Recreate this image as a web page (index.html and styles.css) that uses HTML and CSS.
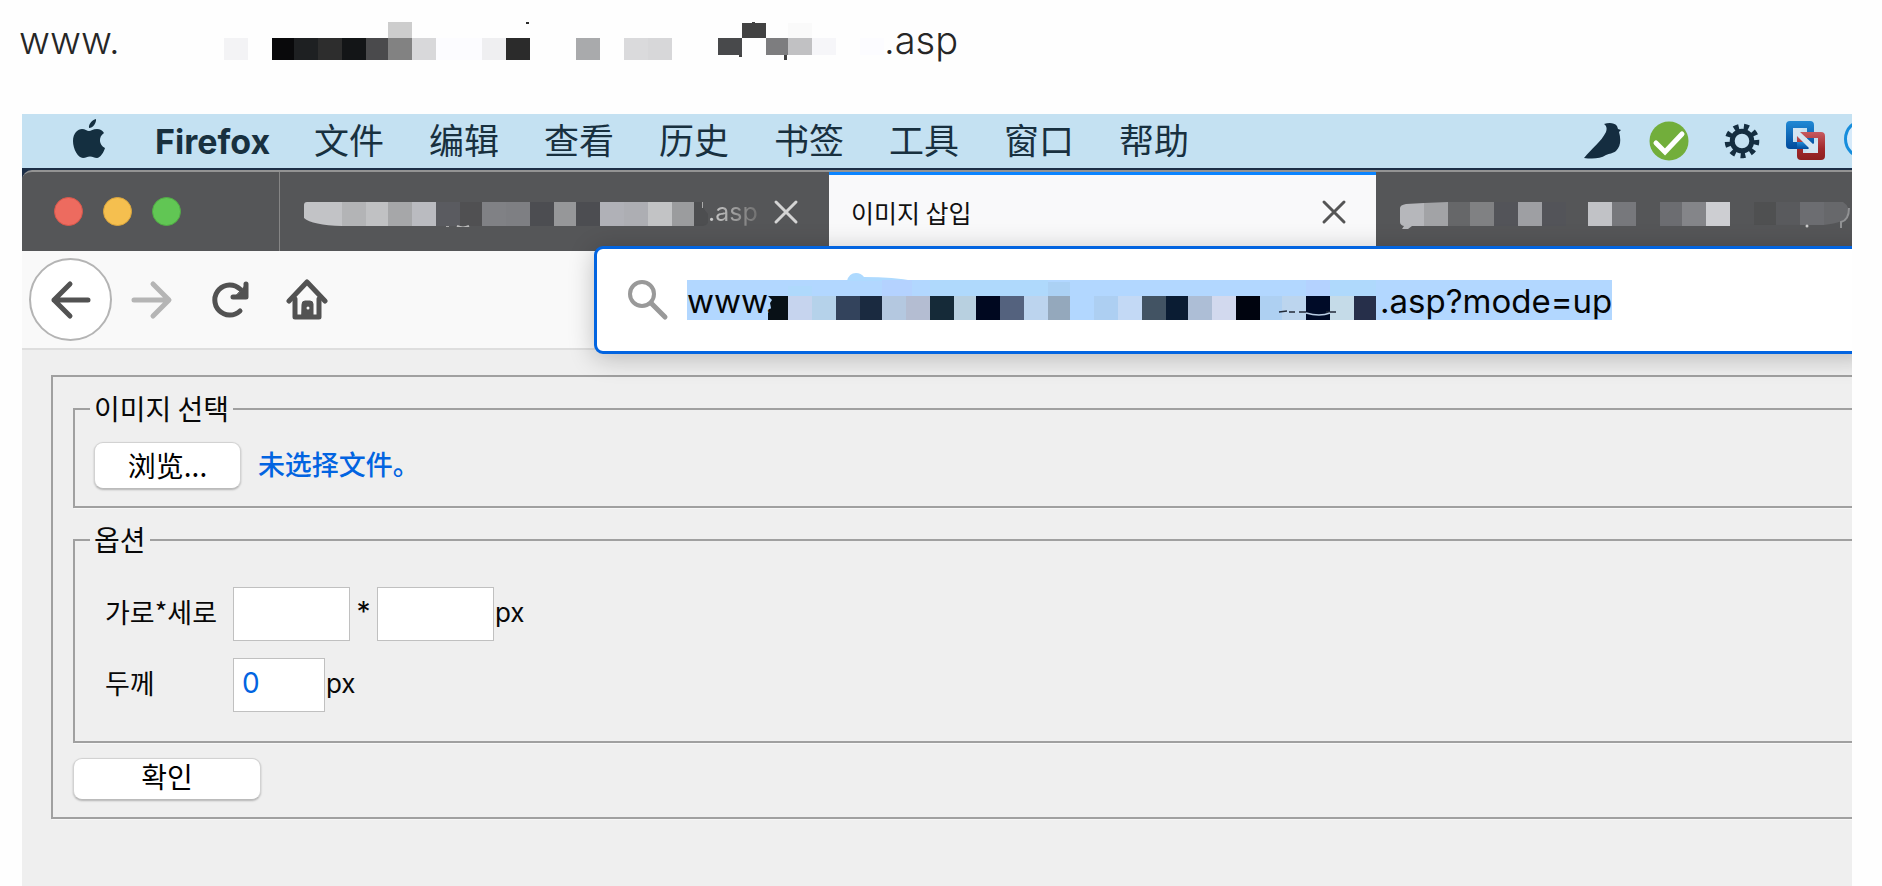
FILE: index.html
```html
<!DOCTYPE html>
<html lang="zh-CN">
<head>
<meta charset="utf-8">
<title>이미지 삽입</title>
<link rel="stylesheet" href="styles.css">
</head>
<body>
<main class="article">
  <p class="address">
    <span class="address-start">www.</span>
    <svg class="address-mask" width="772" height="44" viewBox="112 18 772 44" shape-rendering="crispEdges" aria-hidden="true">
      <path fill="#f3f3f5" d="M224 38h24v22h-24z"/><path fill="#09090b" d="M272 38h22v22h-22z"/><path fill="#1e2022" d="M294 38h24v22h-24z"/><path fill="#2d2d2d" d="M318 38h24v22h-24z"/><path fill="#131517" d="M342 38h24v22h-24z"/><path fill="#4a4a4c" d="M366 38h22v22h-22z"/><path fill="#cdcdcd" d="M388 22h24v16h-24z"/><path fill="#828282" d="M388 38h24v22h-24z"/><path fill="#d8d8da" d="M412 38h24v22h-24z"/><path fill="#fcfcff" d="M436 38h46v22h-46z"/><path fill="#efeff1" d="M482 38h24v22h-24z"/><path fill="#2b2b2b" d="M506 38h24v22h-24zM526 22h3v2h-3z"/>
      <path fill="#a9aaac" d="M576 38h24v22h-24z"/><path fill="#dadadc" d="M624 38h24v22h-24z"/><path fill="#d7d7d9" d="M648 38h24v22h-24z"/><path fill="#48494b" d="M718 38h24v17h-24z"/><path fill="#424242" d="M742 23h24v15h-24zM752 22h3v1h-3zM739 55h3v2h-3zM784 55h3v5h-3z"/><path fill="#7d7d7f" d="M766 38h22v17h-22z"/><path fill="#c1c1c3" d="M788 38h24v17h-24z"/><path fill="#fafafa" d="M788 23h24v15h-24z"/><path fill="#f6f6f9" d="M812 38h24v17h-24z"/><path fill="#fcfcff" d="M860 38h24v17h-24z"/>
    </svg>
    <span>.asp</span>
  </p>

  <section class="desktop">
    <header class="menubar">
      <svg class="apple" width="32" height="40" viewBox="0 0 32 40" aria-hidden="true"><path fill="#142f40" d="M23 0c.5 4-3 9-7 9C15.500 5 19 1 23 0zM16 12c2 0 4-2 8-2 3 0 5.500 1.500 7 4-6 4-5 12 1 15-1 4-5 10-8 10-3 0-4-1.500-7-1.500S13 39 10 39C5 39 0 30 0 22 0 14 5 10 9 10c3 0 5 2 7 2z"/></svg>
      <strong class="app-name">Firefox</strong>
      <nav class="menus"><span>文件</span><span>编辑</span><span>查看</span><span>历史</span><span>书签</span><span>工具</span><span>窗口</span><span>帮助</span></nav>
      <div class="status">
        <svg width="38" height="36" viewBox="0 0 38 36" aria-hidden="true"><path fill="#142d40" d="M20 1c5-1.500 10-1.500 13 2l1 3 3 1-2 2c2 7 2 14-3 19-4 3-6 2-10 4-6 4-14 4-22 3C8 25 17 19 22 9c1-3 1-6-2-8z"/></svg>
        <svg class="status-check" width="40" height="40" viewBox="0 0 40 40" aria-hidden="true"><circle cx="20" cy="20" r="19.500" fill="#72ae3b"/><path d="M7 22l9 9 17-18" fill="none" stroke="#fff" stroke-width="5" stroke-linecap="round"/></svg>
        <svg class="status-gear" width="36" height="36" viewBox="-18 -18 36 36" aria-hidden="true"><g fill="none" stroke="#142d40"><circle r="9.800" stroke-width="5"/><circle r="14.300" stroke-width="6" stroke-dasharray="4.800 5.180" transform="rotate(-4)"/></g></svg>
        <svg class="status-vm" width="40" height="42" viewBox="0 0 40 42" aria-hidden="true"><defs><linearGradient id="vb" x2="0" y2="1"><stop stop-color="#2189d5"/><stop offset="1" stop-color="#004a9c"/></linearGradient><linearGradient id="vr" x2="0" y2="1"><stop stop-color="#c75a60"/><stop offset=".6" stop-color="#a0282b"/><stop offset="1" stop-color="#8d2020"/></linearGradient></defs><path fill="url(#vb)" fill-rule="evenodd" d="M4 1h20q4 0 4 4v20q0 4-4 4H4q-4 0-4-4V5q0-4 4-4zm3 7v14h14V8z"/><path fill="url(#vr)" fill-rule="evenodd" d="M15 12h20q4 0 4 4v20q0 4-4 4H15q-4 0-4-4V16q0-4 4-4zm2 6v15h15V18z"/><path fill="url(#vb)" d="M11 22h10v7H11z"/><path fill="#d3e5f2" d="M7 8h10l-3 4 13 12 5-4v13H19l4-5L11 16l-4 4z"/></svg>
        <svg class="status-ring" width="8" height="40" viewBox="0 0 8 40" aria-hidden="true"><circle cx="20" cy="20" r="18.500" fill="#d6eafa" stroke="#168ddc" stroke-width="3"/></svg>
      </div>
    </header>

    <div class="window">
      <div class="tabbar">
        <div class="lights"><i class="light red"></i><i class="light yellow"></i><i class="light green"></i></div>
        <div class="tab">
          <svg width="404" height="30" viewBox="304 197 404 30" aria-hidden="true"><g shape-rendering="crispEdges"><path fill="#b3b4b6" d="M342 202h24v24h-24z"/><path fill="#c0c1c3" d="M366 202h22v24h-22z"/><path fill="#a6a7a9" d="M388 202h24v24h-24z"/><path fill="#babbc0" d="M412 202h24v24h-24z"/><path fill="#5a5b60" d="M436 202h24v24h-24z"/><path fill="#505052" d="M460 202h22v24h-22z"/><path fill="#808185" d="M482 202h24v24h-24z"/><path fill="#7e7f83" d="M506 202h24v24h-24z"/><path fill="#4c4d51" d="M530 202h24v24h-24zM576 202h24v24h-24z"/><path fill="#969799" d="M554 202h22v24h-22z"/><path fill="#b0b1b7" d="M600 202h24v24h-24z"/><path fill="#adaeb3" d="M624 202h24v24h-24z"/><path fill="#c2c3c5" d="M648 202h24v24h-24z"/><path fill="#9b9c9e" d="M672 202h22v24h-22z"/></g><path fill="#c2c3c6" d="M307 202h35v24q-30-1-38-8v-13q0-3 3-3z"/><path fill="#4d4e50" d="M694 202h8q1 7 6 12v9q-2 3-5 3h-9z"/><path d="M457 226q6 3 12 0" stroke="#bbb" stroke-width="2" fill="none"/><path fill="#aaa" d="M446 226h3v2h-3zM702 202h1v6h-1z"/></svg>
          <span class="tab-fade">.asp</span>
          <button class="close" aria-label="关闭标签页"><svg width="26" height="26" viewBox="0 0 26 26"><path d="M3 3l20 20M23 3L3 23"/></svg></button>
        </div>
        <div class="tab active">
          <span class="tab-title">이미지 삽입</span>
          <button class="close" aria-label="关闭标签页"><svg width="26" height="26" viewBox="0 0 26 26"><path d="M3 3l20 20M23 3L3 23"/></svg></button>
        </div>
        <div class="tab last">
          <svg width="452" height="30" viewBox="1400 199 452 30" aria-hidden="true"><path fill="#b6b7bb" d="M1400 208q0-3 6-4l18-1v23h-12l-4 3h-6l2-3q-4-1-4-4z"/><path fill="#a2a3a6" d="M1424 203l24-1v24h-24z"/><path fill="#666769" d="M1448 202h22v24h-22z"/><path fill="#808183" d="M1470 202h24v24h-24z"/><path fill="#535459" d="M1494 202h24v24h-24zM1542 202h24v24h-24z"/><path fill="#9e9fa3" d="M1518 202h24v24h-24z"/><path fill="#c1c2c6" d="M1588 202h24v24h-24z"/><path fill="#77787c" d="M1612 202h24v24h-24z"/><path fill="#6c6d71" d="M1660 202h22v24h-22zM1800 202h24v23h-24z"/><path fill="#848589" d="M1682 202h24v24h-24z"/><path fill="#cdced2" d="M1706 202h24v24h-24z"/><path fill="#4f5051" d="M1754 202h22v23h-22z"/><path fill="#595a5d" d="M1776 202h24v23h-24z"/><path fill="#67686b" d="M1824 202h19q8 5 5 15-3 5-24 8z"/><path d="M1849 208q0 12-8 14v6" stroke="#919294" stroke-width="2" fill="none"/><circle cx="1807" cy="226" r="1.500" fill="#ccc"/></svg>
        </div>
      </div>

      <div class="toolbar">
        <button class="nav back" aria-label="后退"><svg width="42" height="42" viewBox="0 0 42 42"><path d="M38 21H4M20 5L4 21l16 16"/></svg></button>
        <button class="nav forward" aria-label="前进"><svg width="42" height="42" viewBox="0 0 42 42"><path d="M3 21h34M22 5l16 16-16 16"/></svg></button>
        <button class="nav reload" aria-label="刷新"><svg width="42" height="42" viewBox="0 0 42 42"><path d="M31 32A15 15 0 1 1 31 10"/><path d="M37 5v13H24"/><path class="solid" d="M36 7v11H26z"/></svg></button>
        <button class="nav home" aria-label="主页"><svg width="42" height="42" viewBox="0 0 42 42"><path d="M3 22L21 3l18 19"/><path d="M9 20v18h24V20"/><path class="solid" d="M16 25q0-3 3-3h5q3 0 3 3v13H16z"/><circle cx="22" cy="29" r="1.500"/></svg></button>
        <div class="urlbar" role="textbox" aria-label="地址">
          <svg width="42" height="42" viewBox="0 0 42 42" aria-hidden="true"><circle cx="15" cy="15" r="12" fill="none" stroke="#999" stroke-width="4"/><path d="M24 24l14 14" stroke="#999" stroke-width="5" stroke-linecap="round"/></svg>
          <div class="selection">
            <span class="url-start">www.</span>
            <svg width="610" height="50" viewBox="768 270 610 50" aria-hidden="true"><path fill="#aedaff" d="M847 281q2-8 9-8 5 0 8 4 30 0 50 4z"/><g shape-rendering="crispEdges"><path fill="#b4d2ff" d="M882 280h30v16h-30zM1306 280h24v16h-24z"/><path fill="#afd9fc" d="M788 286h24v10h-24zM930 280h118v16H930zM1330 280h46v16h-46z"/><path fill="#abd1f4" d="M1048 282h22v14h-22z"/>
            <path fill="#c6d4ee" d="M788 296h24v24h-24z"/><path fill="#b5d2ea" d="M812 296h24v24h-24z"/><path fill="#33435c" d="M836 296h24v24h-24z"/><path fill="#1a2a40" d="M860 296h22v24h-22z"/><path fill="#b4c8e0" d="M882 296h24v24h-24z"/><path fill="#b4bdd2" d="M906 296h24v24h-24z"/><path fill="#152a38" d="M930 296h24v24h-24z"/><path fill="#b8d0e0" d="M954 296h22v24h-22z"/><path fill="#000820" d="M976 296h24v24h-24z"/><path fill="#54627e" d="M1000 296h24v24h-24z"/><path fill="#bcd4ee" d="M1024 296h24v24h-24z"/><path fill="#94a8bc" d="M1048 296h22v24h-22z"/><path fill="#adcff2" d="M1094 296h24v24h-24z"/><path fill="#c3d9f5" d="M1118 296h24v24h-24z"/><path fill="#425363" d="M1142 296h24v24h-24z"/><path fill="#0a1c33" d="M1166 296h22v24h-22z"/><path fill="#adbed6" d="M1188 296h24v24h-24z"/><path fill="#d2d9ee" d="M1212 296h24v24h-24z"/><path fill="#00040f" d="M1236 296h24v24h-24z"/><path fill="#aed0f2" d="M1260 296h22v24h-22z"/><path fill="#bcd5ee" d="M1282 296h24v24h-24z"/><path fill="#000b28" d="M1306 296h24v24h-24z"/><path fill="#c5dbe8" d="M1330 296h24v24h-24z"/><path fill="#262f4a" d="M1354 296h22v24h-22z"/></g><path fill="#081016" d="M768 296h20v24h-20v-7l3-5-1-5 2-3z"/><path d="M1279 312l8-1M1289 312h6M1299 312h7M1326 312h10" stroke="#222a38" stroke-width="1.500" fill="none"/><path d="M1306 313q14 4 24 0" stroke="#b9cde4" stroke-width="1.500" fill="none"/></svg>
            <span class="url-end">.asp?mode=up</span>
          </div>
        </div>
      </div>

      <form class="page">
        <fieldset class="outer">
          <fieldset class="group pick">
            <legend>이미지 선택</legend>
            <button type="button" class="push browse">浏览...</button>
            <output class="filename">未选择文件。</output>
          </fieldset>
          <fieldset class="group options">
            <legend>옵션</legend>
            <div class="row">
              <label for="w">가로*세로</label>
              <input id="w" type="text"><span class="times">*</span><input type="text" aria-label="세로"><span class="unit">px</span>
            </div>
            <div class="row">
              <label for="b">두께</label>
              <input id="b" class="short" type="text" value="0"><span class="unit">px</span>
            </div>
          </fieldset>
          <button type="button" class="push confirm">확인</button>
        </fieldset>
      </form>
    </div>
  </section>
</main>
</body>
</html>
```

FILE: styles.css
```css
* { box-sizing: border-box; }

body {
  margin: 0;
  background: #fefefe;
  font-family: Inter, "Noto Sans CJK SC", sans-serif;
}

svg { display: block; flex: none; }

button {
  border: 0;
  padding: 0;
  background: none;
  font: inherit;
}

.article {
  display: flex;
  flex-direction: column;
  min-height: 100vh;
  padding: 0 30px 0 22px;
}

.address {
  display: flex;
  align-items: center;
  height: 80px;
  margin: 0 0 34px -3px;
  color: #262626;
  font-size: 38px;
  font-weight: 300;
  line-height: 44px;
}

.address-start { width: 93px; }

.desktop {
  display: flex;
  flex-direction: column;
  flex: 1;
  overflow: hidden;
  background: #1c2e47;
}

/* System menu bar */
.menubar {
  display: flex;
  align-items: center;
  height: 54px;
  padding-left: 51px;
  background: #c4e1f2;
  color: #18303f;
}

.apple { margin-bottom: 4px; }

.app-name {
  width: 157px;
  margin-left: 50px;
  font-size: 34px;
}

.menus {
  display: flex;
  gap: 45px;
  margin-left: 2px;
  font-size: 35px;
  line-height: 50px;
  white-space: nowrap;
}

.status {
  display: flex;
  align-items: center;
  margin-left: auto;
}

.status-check { margin-left: 27px; }
.status-gear { margin-left: 35px; }
.status-vm { margin-left: 26px; }
.status-ring { margin: 0 0 4px 18px; }

/* Browser window */
.window {
  display: flex;
  flex-direction: column;
  flex: 1;
  margin-top: 2px;
  border-top: 2px solid #939393;
  border-top-left-radius: 10px;
  background: #555658;
}

.tabbar {
  display: flex;
  height: 79px;
}

.lights {
  display: flex;
  align-items: center;
  gap: 20px;
  width: 258px;
  padding-left: 32px;
  border-right: 1px solid #858585;
}

.light {
  width: 29px;
  height: 29px;
  border-radius: 50%;
}

.red { background: #ed6b5f; border: 1px solid #d9574b; }
.yellow { background: #f5bf4f; border: 1px solid #dba63c; }
.green { background: #61c654; border: 1px solid #51ac45; }

.tab {
  display: flex;
  align-items: center;
  width: 549px;
  padding: 0 30px 0 24px;
  color: #c8c8c8;
  font-size: 25px;
}

.active {
  width: 547px;
  padding: 0 29px 2px 22px;
  border-top: 3px solid #0a84ff;
  background: #f9f9fa;
  color: #111;
  font-family: "Noto Sans CJK KR", sans-serif;
}

.last {
  flex: 1;
  padding: 4px 0 0 24px;
}

.tab-fade {
  background: linear-gradient(90deg, #d0d0d0, #707070);
  background-clip: text;
  color: transparent;
}

.close {
  margin-left: auto;
}

.close path {
  fill: none;
  stroke: #d4d4d4;
  stroke-width: 3;
  stroke-linecap: round;
}

.active .close path { stroke: #555; }

.toolbar {
  display: flex;
  align-items: center;
  height: 99px;
  padding-left: 7px;
  border-bottom: 2px solid #dedede;
  background: #f9f9f9;
}

.nav {
  display: grid;
  place-items: center;
}

.nav path {
  fill: none;
  stroke: #525252;
  stroke-width: 5;
  stroke-linecap: round;
  stroke-linejoin: round;
}

.nav .solid { fill: #525252; stroke-width: 1; }
.nav circle { fill: #f9f9f9; }

.back {
  width: 83px;
  height: 83px;
  border: 2px solid #b4b4b4;
  border-radius: 50%;
  background: #fff;
}

.forward { margin-left: 19px; }
.forward path { stroke: #b5b5b5; }
.reload { margin-left: 36px; }
.home { margin-left: 35px; }

.urlbar {
  position: relative;
  z-index: 1;
  display: flex;
  flex: 1;
  align-items: center;
  height: 108px;
  margin: 0 -20px 0 266px;
  padding-left: 30px;
  border: 3px solid #0264e0;
  border-radius: 9px;
  background: #fff;
  box-shadow: 0 4px 26px rgb(0 0 0 / 24%);
}

.selection {
  display: flex;
  align-items: flex-end;
  height: 40px;
  margin-left: 18px;
  background: #b2d7ff;
  color: #050505;
  font-size: 33px;
  line-height: 38px;
}

.url-start { width: 81px; }

.url-end { padding-left: 2px; }

/* Upload form */
.page {
  flex: 1;
  padding: 25px 0 60px 29px;
  background: #efefef;
  color: #080808;
  font-family: Inter, "Noto Sans CJK KR", sans-serif;
  font-size: 28px;
}

fieldset {
  min-width: 0;
  margin: 0;
  border: 2px solid #a0a0a0;
  box-shadow: 1px 1px 0 #f7f7f7;
}

.outer {
  margin-right: -24px;
  padding: 12px 0 17px 20px;
}

.group { margin-bottom: 12px; }

legend {
  margin-left: -4px;
  padding: 0 4px;
  font-family: "Noto Sans CJK KR", sans-serif;
  line-height: 39px;
}

.pick {
  padding: 14px 0 17px 19px;
}

.push {
  border: 1px solid #d2d2d2;
  border-bottom-color: #bbb;
  border-radius: 9px;
  background: #fff;
  box-shadow: 0 1px 2px rgb(0 0 0 / 25%);
}

.browse {
  width: 147px;
  height: 47px;
  padding-bottom: 2px;
  font-family: "Noto Sans CJK SC", sans-serif;
  line-height: 40px;
  vertical-align: top;
}

.filename {
  display: inline-block;
  margin-left: 9px;
  color: #0264e1;
  font: 500 27px/44px "Noto Sans CJK SC", sans-serif;
  vertical-align: top;
}

.options {
  display: grid;
  gap: 17px;
  margin-bottom: 15px;
  padding: 28px 0 29px 30px;
}

.options legend { margin-left: -15px; }

.row {
  display: flex;
  align-items: center;
}

.row label {
  width: 128px;
  padding-bottom: 4px;
  font: 27px/40px "Noto Sans CJK KR", sans-serif;
}

.row input {
  width: 117px;
  height: 54px;
  padding: 0 8px 4px;
  border: 1px solid #c0c0c0;
  background: #fff;
  color: #0264e1;
  font: 28px Inter, sans-serif;
}

.row .short { width: 92px; }

.times {
  width: 27px;
  padding-bottom: 4px;
  text-align: center;
}

.unit {
  padding: 0 0 4px 1px;
  font-size: 26px;
}

.confirm {
  display: block;
  width: 188px;
  height: 42px;
  padding-bottom: 6px;
  font-family: "Noto Sans CJK KR", sans-serif;
  line-height: 34px;
}
```
